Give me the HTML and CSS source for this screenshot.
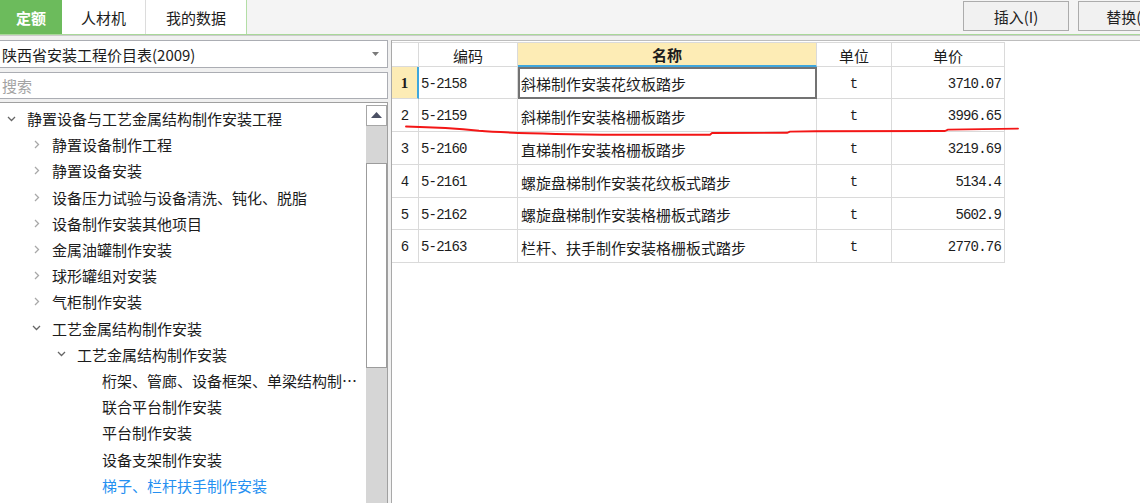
FILE: index.html
```html
<!DOCTYPE html>
<html lang="zh-CN">
<head>
<meta charset="utf-8">
<title>定额</title>
<link rel="stylesheet" href="styles.css">
</head>
<body>
<div class="app">
  <div class="topbar">
    <div class="tab active">定额</div>
    <div class="tab t2">人材机</div>
    <div class="tab t3">我的数据</div>
    <div class="tools">
      <button class="btn">插入(I)</button>
      <button class="btn">替换(R)</button>
    </div>
  </div>
  <div class="main">
    <div class="left">
      <div class="combo">
        <span>陕西省安装工程价目表(2009)</span>
        <svg class="caret" width="7" height="4" viewBox="0 0 7 4"><path d="M0 0H7L3.5 4Z" fill="#7a7a7a"/></svg>
      </div>
      <div class="search">搜索</div>
      <div class="treebox">
        <ul class="tree">
          <li class="l0"><span class="ic"><svg width="9" height="6" viewBox="0 0 9 6"><path d="M1 1L4.5 4.5L8 1" fill="none" stroke="#666" stroke-width="1.3"/></svg></span><span class="lb">静置设备与工艺金属结构制作安装工程</span></li>
          <li class="l1"><span class="ic"><svg width="6" height="9" viewBox="0 0 6 9"><path d="M1 1L4.5 4.5L1 8" fill="none" stroke="#a8a8a8" stroke-width="1.3"/></svg></span><span class="lb">静置设备制作工程</span></li>
          <li class="l1"><span class="ic"><svg width="6" height="9" viewBox="0 0 6 9"><path d="M1 1L4.5 4.5L1 8" fill="none" stroke="#a8a8a8" stroke-width="1.3"/></svg></span><span class="lb">静置设备安装</span></li>
          <li class="l1"><span class="ic"><svg width="6" height="9" viewBox="0 0 6 9"><path d="M1 1L4.5 4.5L1 8" fill="none" stroke="#a8a8a8" stroke-width="1.3"/></svg></span><span class="lb">设备压力试验与设备清洗、钝化、脱脂</span></li>
          <li class="l1"><span class="ic"><svg width="6" height="9" viewBox="0 0 6 9"><path d="M1 1L4.5 4.5L1 8" fill="none" stroke="#a8a8a8" stroke-width="1.3"/></svg></span><span class="lb">设备制作安装其他项目</span></li>
          <li class="l1"><span class="ic"><svg width="6" height="9" viewBox="0 0 6 9"><path d="M1 1L4.5 4.5L1 8" fill="none" stroke="#a8a8a8" stroke-width="1.3"/></svg></span><span class="lb">金属油罐制作安装</span></li>
          <li class="l1"><span class="ic"><svg width="6" height="9" viewBox="0 0 6 9"><path d="M1 1L4.5 4.5L1 8" fill="none" stroke="#a8a8a8" stroke-width="1.3"/></svg></span><span class="lb">球形罐组对安装</span></li>
          <li class="l1"><span class="ic"><svg width="6" height="9" viewBox="0 0 6 9"><path d="M1 1L4.5 4.5L1 8" fill="none" stroke="#a8a8a8" stroke-width="1.3"/></svg></span><span class="lb">气柜制作安装</span></li>
          <li class="l1"><span class="ic"><svg width="9" height="6" viewBox="0 0 9 6"><path d="M1 1L4.5 4.5L8 1" fill="none" stroke="#666" stroke-width="1.3"/></svg></span><span class="lb">工艺金属结构制作安装</span></li>
          <li class="l2"><span class="ic"><svg width="9" height="6" viewBox="0 0 9 6"><path d="M1 1L4.5 4.5L8 1" fill="none" stroke="#666" stroke-width="1.3"/></svg></span><span class="lb">工艺金属结构制作安装</span></li>
          <li class="l3"><span class="ic"></span><span class="lb">桁架、管廊、设备框架、单梁结构制作安装</span></li>
          <li class="l3"><span class="ic"></span><span class="lb">联合平台制作安装</span></li>
          <li class="l3"><span class="ic"></span><span class="lb">平台制作安装</span></li>
          <li class="l3"><span class="ic"></span><span class="lb">设备支架制作安装</span></li>
          <li class="l3 active"><span class="ic"></span><span class="lb">梯子、栏杆扶手制作安装</span></li>
        </ul>
        <div class="sb">
          <div class="sb-btn"><svg width="11" height="6" viewBox="0 0 11 6"><path d="M0 6L5.5 0L11 6Z" fill="#4b5064"/></svg></div>
          <div class="sb-track"><div class="sb-thumb"></div></div>
        </div>
      </div>
    </div>
    <div class="right">
      <div class="grid">
        <div class="c hd"></div>
        <div class="c hd">编码</div>
        <div class="c hd sel">名称</div>
        <div class="c hd">单位</div>
        <div class="c hd">单价</div>

        <div class="c num cur">1</div>
        <div class="c code">5-2158</div>
        <div class="c name focus">斜梯制作安装花纹板踏步</div>
        <div class="c unit">t</div>
        <div class="c price">3710.07</div>

        <div class="c num">2</div>
        <div class="c code">5-2159</div>
        <div class="c name">斜梯制作安装格栅板踏步</div>
        <div class="c unit">t</div>
        <div class="c price">3996.65</div>

        <div class="c num">3</div>
        <div class="c code">5-2160</div>
        <div class="c name">直梯制作安装格栅板踏步</div>
        <div class="c unit">t</div>
        <div class="c price">3219.69</div>

        <div class="c num">4</div>
        <div class="c code">5-2161</div>
        <div class="c name">螺旋盘梯制作安装花纹板式踏步</div>
        <div class="c unit">t</div>
        <div class="c price">5134.4</div>

        <div class="c num">5</div>
        <div class="c code">5-2162</div>
        <div class="c name">螺旋盘梯制作安装格栅板式踏步</div>
        <div class="c unit">t</div>
        <div class="c price">5602.9</div>

        <div class="c num">6</div>
        <div class="c code">5-2163</div>
        <div class="c name">栏杆、扶手制作安装格栅板式踏步</div>
        <div class="c unit">t</div>
        <div class="c price">2770.76</div>
      </div>
    </div>
  </div>
  <svg class="mark" width="1140" height="503" viewBox="0 0 1140 503">
    <path d="M406 126.5C428 127 458 128.5 479 130.8C500 132.6 560 134.2 620 134.8L710 134.8L712 133L787 132.8L790 131.6L816 131.2L945 131L948 129.6L1018 128.6" fill="none" stroke="#f31616" stroke-width="1.9" stroke-linecap="round" stroke-linejoin="round"/>
  </svg>
</div>
</body>
</html>
```

FILE: styles.css
```css
* { box-sizing: border-box; }
html, body { margin: 0; padding: 0; }
body {
  width: 1140px;
  height: 503px;
  overflow: hidden;
  background: #f0f0f0;
  font-family: "Noto Sans CJK SC", "Microsoft YaHei", sans-serif;
  font-size: 15px;
  color: #1c1c1c;
}
.app {
  position: relative;
  width: 1140px;
  height: 520px;
  display: flex;
  flex-direction: column;
}

/* top bar */
.topbar {
  height: 35px;
  flex: none;
  display: flex;
  align-items: flex-start;
  overflow: hidden;
  background: #f4f4f4;
  border-bottom: 1px solid #a9d89a;
}
.tab {
  flex: none;
  height: 34px;
  display: flex;
  align-items: center;
  justify-content: center;
  background: #fff;
  border-right: 1px solid #dcdcdc;
}
.tab.active {
  width: 62px;
  background: #6cbb5c;
  color: #fff;
  font-weight: bold;
  border-right: none;
}
.t2 { width: 84px; }
.t3 { width: 101px; border-right-color: #b3dea6; }
.tools {
  flex: none;
  display: flex;
  gap: 9px;
  margin-left: 716px;
  padding-top: 1px;
}
.btn {
  width: 106px;
  height: 30px;
  flex: none;
  font: inherit;
  color: #222;
  background: #f1f1f1;
  border: 1px solid #acacac;
  border-radius: 0;
  padding: 0;
}

/* main */
.main {
  flex: 1;
  display: flex;
  border-top: 1px solid #cbcbcb;
  padding-top: 4px;
  min-height: 0;
}
.left {
  width: 388px;
  flex: none;
  display: flex;
  flex-direction: column;
}
.combo {
  height: 28px;
  flex: none;
  display: flex;
  align-items: center;
  justify-content: space-between;
  background: #fff;
  border: 1px solid #abadb3;
  border-left: none;
  padding: 0 8px 0 2px;
}
.caret { display: block; }
.search {
  height: 27px;
  flex: none;
  margin-top: 4px;
  display: flex;
  align-items: center;
  padding-left: 2px;
  background: #fff;
  border: 1px solid #abadb3;
  border-left: none;
  color: #a3a3a3;
}
.treebox {
  flex: 1;
  margin-top: 3px;
  display: flex;
  background: #fff;
  border: 1px solid #a0a0a0;
  border-left: none;
  min-height: 0;
}
.tree {
  list-style: none;
  margin: 0;
  padding: 2.5px 8px 0 0;
  flex: 1;
  min-width: 0;
  overflow: hidden;
}
.tree li {
  height: 26.2px;
  display: flex;
  align-items: center;
  white-space: nowrap;
}
.tree .l1 { padding-left: 25px; }
.tree .l2 { padding-left: 50px; }
.tree .l3 { padding-left: 75px; }
.ic {
  width: 23px;
  flex: none;
  margin-right: 4px;
  display: flex;
  align-items: center;
  justify-content: center;
}
.ic svg { display: block; }
.lb {
  overflow: hidden;
  text-overflow: ellipsis;
  min-width: 0;
}
.tree li.active { color: #2590f1; }

/* scrollbar */
.sb {
  width: 21px;
  flex: none;
  display: flex;
  flex-direction: column;
  padding-top: 2px;
}
.sb-btn {
  height: 21px;
  flex: none;
  display: flex;
  align-items: center;
  justify-content: center;
  background: #fff;
  border: 1px solid #a6a6a6;
}
.sb-btn svg { display: block; margin-top: -2px; }
.sb-track {
  flex: 1;
  background: #d6d6d6;
  padding-top: 37px;
}
.sb-thumb {
  height: 205px;
  background: #fff;
  border: 1px solid #9c9c9c;
}

/* right panel */
.right {
  flex: 1;
  margin-left: 3px;
  background: #fff;
  border-top: 1px solid #bdbdbd;
  border-left: 1px solid #a9a9a9;
  padding-top: 1px;
}
.grid {
  display: grid;
  width: 613px;
  grid-template-columns: 27px 99px 299px 75px 113px;
  grid-template-rows: 24px 32px 33px 33px 33px 32px 33px;
  border-top: 1px solid #dadada;
}
.c {
  display: flex;
  align-items: center;
  padding-top: 2px;
  border-right: 1px solid #dadada;
  border-bottom: 1px solid #dadada;
  white-space: nowrap;
  overflow: hidden;
}
.hd { justify-content: center; padding-top: 1px; }
.hd.sel {
  background: #fdecb5;
  font-weight: bold;
  border-bottom: 2px solid #3fa7dd;
}
.num {
  justify-content: center;
  font-family: "Liberation Mono", monospace;
  font-size: 14px;
}
.num.cur {
  background: #fdecb5;
  font-family: "Liberation Serif", serif;
  font-weight: bold;
  font-size: 15px;
  border-right: 2px solid #3fa7dd;
}
.code {
  padding-left: 2px;
  font-family: "Liberation Mono", monospace;
  font-size: 14px;
  letter-spacing: -0.8px;
}
.name { padding-left: 3px; }
.name.focus {
  outline: 2px solid #737373;
  outline-offset: -2px;
}
.unit {
  justify-content: center;
  font-family: "Liberation Mono", monospace;
  font-size: 14px;
}
.price {
  justify-content: flex-end;
  padding-right: 3px;
  font-family: "Liberation Mono", monospace;
  font-size: 14px;
  letter-spacing: -0.8px;
}

/* annotation */
.mark {
  position: absolute;
  left: 0;
  top: 0;
  pointer-events: none;
}
```
